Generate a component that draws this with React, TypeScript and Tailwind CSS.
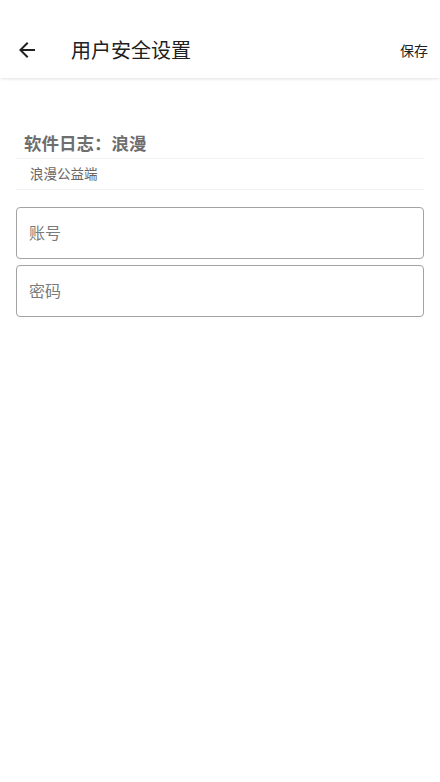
import * as React from 'react';

const FONT = { fontFamily: '"Noto Sans CJK SC", "Noto Sans", sans-serif' };

function BackArrow() {
  return (
    <svg viewBox="0 0 24 24" className="h-6 w-6" fill="#212121" aria-hidden="true">
      <path d="M20 11H7.83l5.59-5.59L12 4l-8 8 8 8 1.41-1.41L7.83 13H20v-2z" />
    </svg>
  );
}

function Field({ label }: { label: string }) {
  return (
    <label className="flex h-[52px] items-center rounded-[4px] border border-[#a3a3a3] bg-white px-3">
      <input
        type="text"
        placeholder={label}
        className="-mt-[2px] w-full bg-transparent text-[16px] text-[#333] outline-none placeholder:text-[#7a7a7a]"
        style={FONT}
      />
    </label>
  );
}

export default function App() {
  return (
    <div className="min-h-[782px] w-full bg-white" style={FONT}>
      <div className="h-[22px]" />
      <header className="relative z-10 flex h-[56px] items-center bg-white pl-[15px] pr-3 shadow-[0_2px_3px_-1px_rgba(0,0,0,0.12)]">
        <button type="button" className="flex items-center">
          <BackArrow />
        </button>
        <h1 className="ml-[32px] flex-1 text-[20px] leading-none text-[#212121]">用户安全设置</h1>
        <button type="button" className="text-[14px] leading-none text-[#212121]">
          保存
        </button>
      </header>

      <main className="px-4">
        <section className="mt-[52px]">
          <div className="border-b border-[#f2f2f2] pb-[2px] pl-2">
            <h2 className="text-[17.5px] font-bold leading-[26px] text-[#6e6e6e]">软件日志：浪漫</h2>
          </div>
          <div className="border-b border-[#f2f2f2] pb-[2px] pl-[14px] text-[13.5px] leading-[28px] text-[#666]">
            浪漫公益端
          </div>
        </section>

        <div className="mt-[17px] flex flex-col gap-[6px]">
          <Field label="账号" />
          <Field label="密码" />
        </div>
      </main>
    </div>
  );
}
